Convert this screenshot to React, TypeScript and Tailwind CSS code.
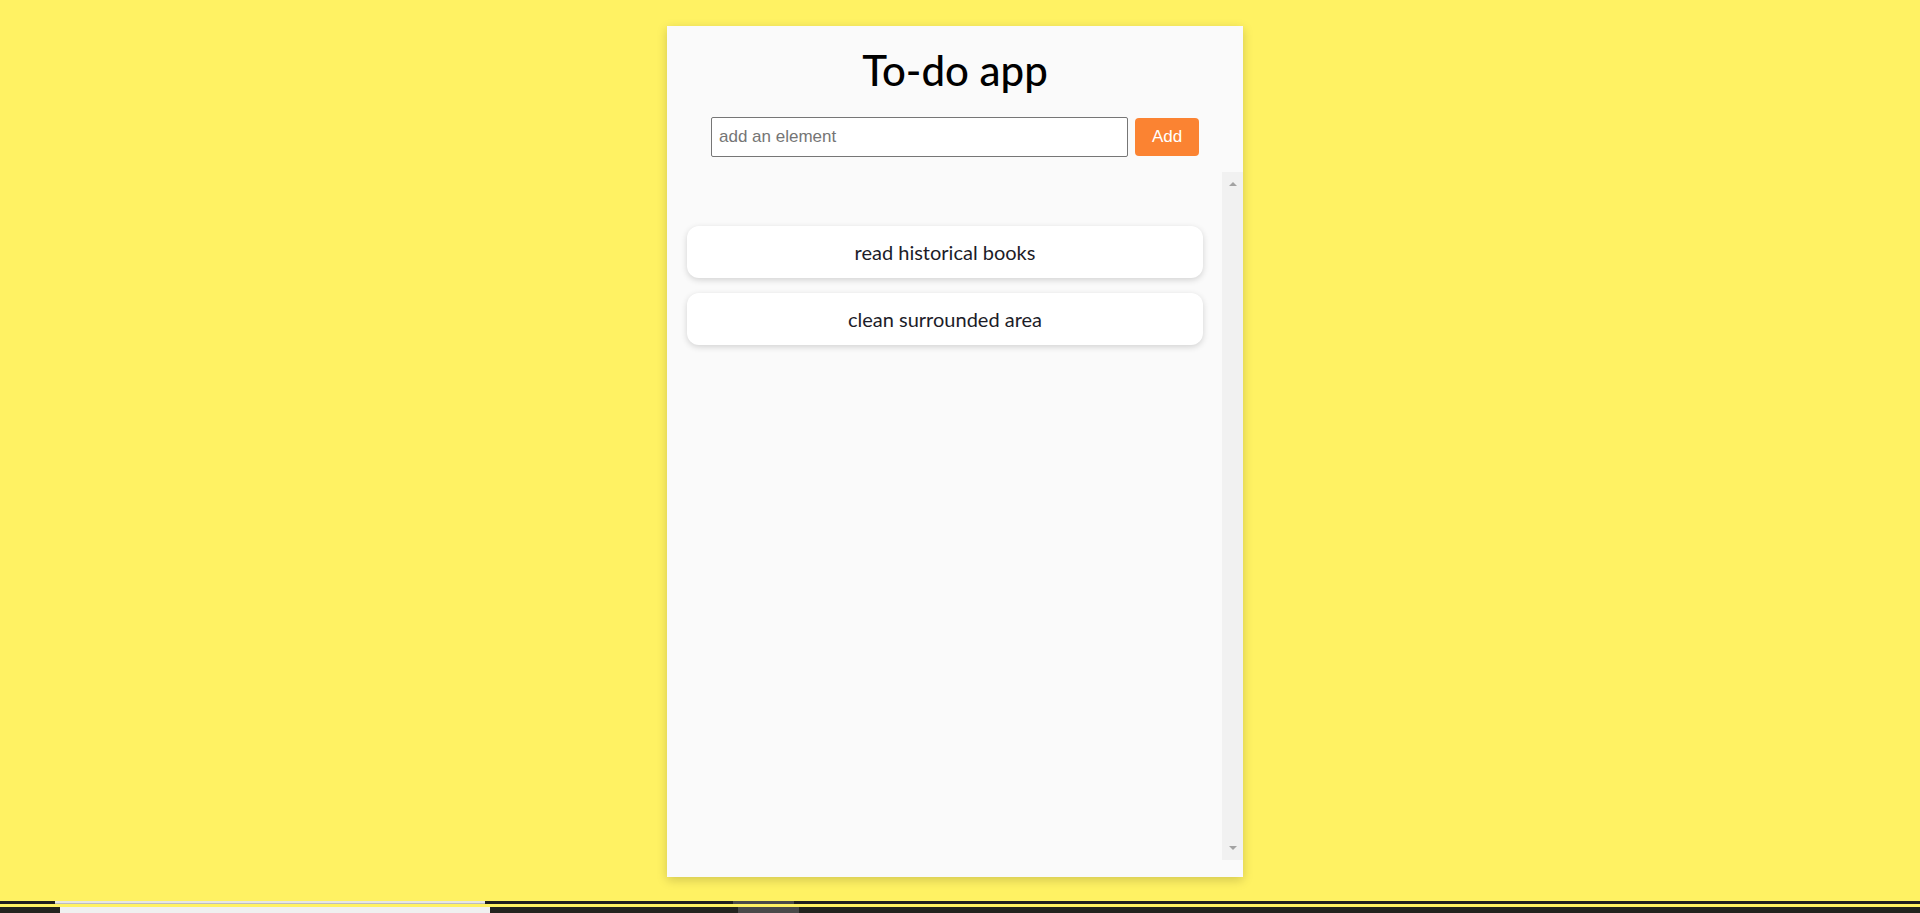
import React from "react";

const todos = ["read historical books", "clean surrounded area"];

function ScrollTrack() {
  return (
    <div className="w-[21px] bg-[#f1f1f1] flex flex-col justify-between items-center">
      <div className="h-[24px] flex items-center justify-center">
        <svg width="8" height="4" viewBox="0 0 8 4">
          <path d="M4 0 L8 4 L0 4 Z" fill="#a3a3a3" />
        </svg>
      </div>
      <div className="h-[24px] flex items-center justify-center">
        <svg width="8" height="4" viewBox="0 0 8 4">
          <path d="M0 0 L8 0 L4 4 Z" fill="#a3a3a3" />
        </svg>
      </div>
    </div>
  );
}

export default function App() {
  const [items, setItems] = React.useState(todos);
  const [value, setValue] = React.useState("");

  return (
    <div className="w-full h-[913px] bg-[#fff263] flex flex-col overflow-hidden">
      {/* --- page --- */}
      <div className="h-[901px] flex pl-[667px] pt-[26px]">
        <div className="w-[576px] h-[851px] bg-[#fafafa] shadow-[0_3px_10px_rgba(0,0,0,0.18)] flex flex-col">
          <h1
            className="mt-[20px] text-center text-[42px] leading-[48px] font-medium text-black"
            style={{ fontFamily: "Lato, 'Open Sans', sans-serif" }}
          >
            To-do app
          </h1>

          <form
            className="mt-[23px] flex items-center justify-center gap-[7px]"
            onSubmit={(e) => {
              e.preventDefault();
              if (value.trim()) {
                setItems([...items, value.trim()]);
                setValue("");
              }
            }}
          >
            <input
              value={value}
              onChange={(e) => setValue(e.target.value)}
              placeholder="add an element"
              className="w-[417px] h-[40px] bg-white border border-[#767676] rounded-[2px] px-[7px] text-[17px] text-black placeholder:text-[#757575] outline-none"
              style={{ fontFamily: "'Liberation Sans', Arial, sans-serif" }}
            />
            <button
              type="submit"
              className="w-[64px] h-[38px] bg-[#fb8332] text-white text-[17px] rounded-[4px]"
              style={{ fontFamily: "'Liberation Sans', Arial, sans-serif" }}
            >
              Add
            </button>
          </form>

          <div className="mt-[15px] h-[688px] flex">
            <div className="flex-1 pl-[20px] pr-[19px] pt-[54px] flex flex-col gap-[15px]">
              {items.map((item) => (
                <div
                  key={item}
                  className="h-[52px] bg-white rounded-[12px] shadow-[0_2px_6px_rgba(0,0,0,0.16)] flex items-center justify-center text-[20px] text-[#1c1c28]"
                  style={{ fontFamily: "Lato, 'Open Sans', sans-serif" }}
                >
                  {item}
                </div>
              ))}
            </div>
            <ScrollTrack />
          </div>
        </div>
      </div>

      {/* --- bottom strips --- */}
      <div className="h-[3px] flex">
        <div className="w-[55px] bg-[#1f1f1f]" />
        <div className="w-[430px] bg-[#e6e6e6] border-b border-[#bdbdbd]" />
        <div className="w-[248px] bg-[#1f1f1f]" />
        <div className="w-[61px] bg-[#4a4a4a]" />
        <div className="flex-1 bg-[#1f1f1f]" />
      </div>
      <div className="h-[3px]" />
      <div className="flex-1 flex">
        <div className="w-[60px] bg-[#23241f]" />
        <div className="w-[430px] bg-[#f0f0f0]" />
        <div className="w-[248px] bg-[#23241f]" />
        <div className="w-[61px] bg-[#4a4a4a]" />
        <div className="flex-1 bg-[#22231e]" />
      </div>
    </div>
  );
}
